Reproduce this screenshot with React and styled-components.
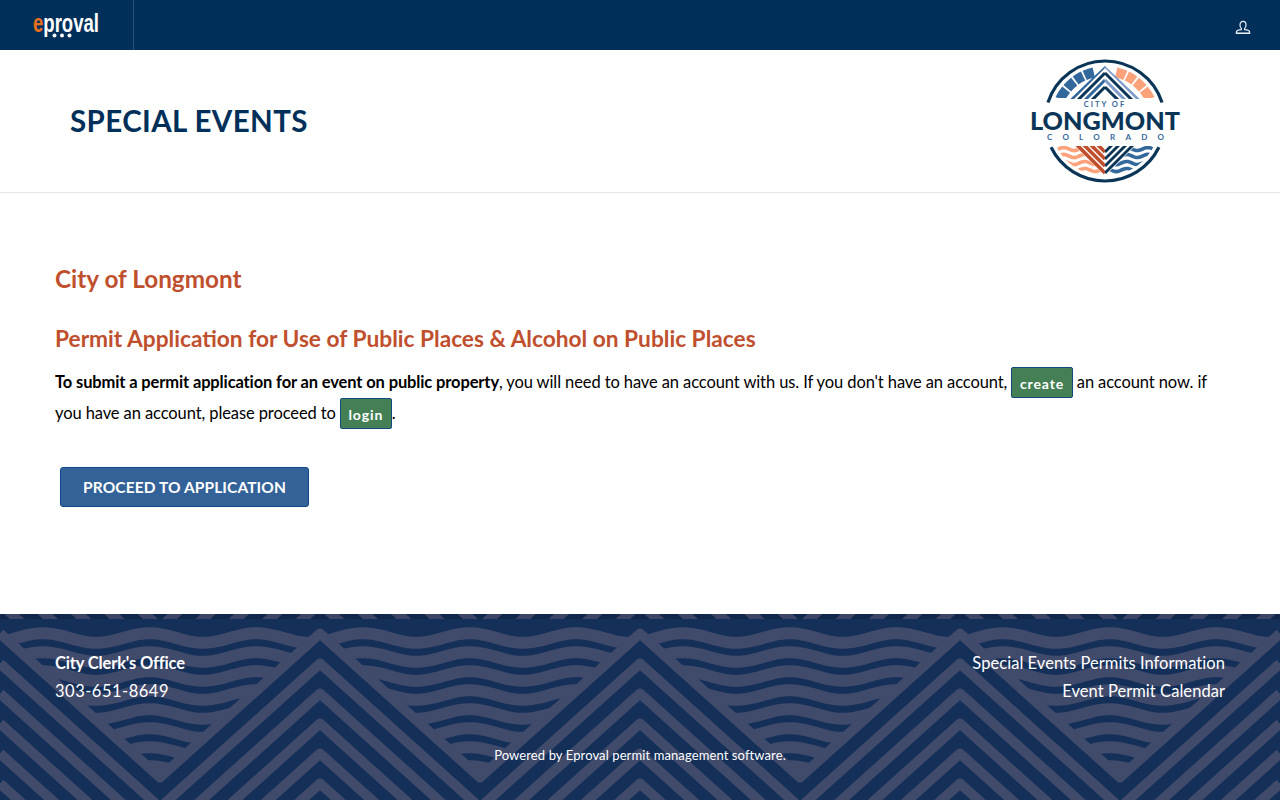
import React from 'react'
import styled, { createGlobalStyle } from 'styled-components'

const NAVY = '#002f5a'
const RUST = '#c04f2e'
const FONT = 'Lato, "Open Sans", sans-serif'

const GlobalStyle = createGlobalStyle`
  html, body {
    margin: 0;
    padding: 0;
    background: white;
    font-family: ${FONT};
  }
  * { box-sizing: border-box; }
`

const Page = styled.div`
  min-height: 100vh;
  display: flex;
  flex-direction: column;
`

const TopBar = styled.div`
  height: 50px;
  background: ${NAVY};
  display: flex;
  align-items: stretch;
  justify-content: space-between;
`

const Brand = styled.div`
  width: 134px;
  border-right: 1px solid #2b5079;
  display: flex;
  align-items: center;
  padding-left: 33px;
`

const UserButton = styled.div`
  display: flex;
  align-items: center;
  padding: 6px 29px 0 0;
`

const Banner = styled.header`
  height: 143px;
  border-bottom: 1px solid #e6e6e6;
  display: flex;
  align-items: center;
  justify-content: space-between;
  padding: 0 98px 0 70px;
`

const Title = styled.h1`
  margin: 0 0 2px;
  color: ${NAVY};
  font-size: 29.5px;
  font-weight: 700;
  letter-spacing: 0.4px;
  text-transform: uppercase;
`

const Main = styled.main`
  flex: 1;
  padding: 70px 55px 0;
`

const Heading = styled.h2`
  margin: 0;
  color: ${RUST};
  font-weight: 700;
  font-size: ${props => props.size}px;
  line-height: 32px;
  margin-bottom: ${props => props.after}px;
`

const Copy = styled.p`
  margin: 0;
  font-size: 16.5px;
  line-height: 31px;
  color: #000;
  letter-spacing: -0.1px;

  strong { font-weight: 700; letter-spacing: -0.13px; }
`

const SmallButton = styled.a`
  display: inline-block;
  height: 31px;
  line-height: 31px;
  padding: 0 7.5px;
  background: #447f55;
  border: 1px solid #104a7e;
  border-radius: 2px;
  color: white;
  font-size: 14px;
  font-weight: 700;
  letter-spacing: 0.9px;
  vertical-align: top;
`

const ProceedButton = styled.button`
  display: block;
  margin: 38px 0 0 5px;
  width: 249px;
  height: 40px;
  padding: 0;
  background: #336298;
  border: 1px solid #0f478b;
  border-radius: 3px;
  color: white;
  font-family: ${FONT};
  font-size: 15.5px;
  font-weight: 700;
  letter-spacing: 0.1px;
  text-transform: uppercase;
`

const Footer = styled.footer`
  position: relative;
  height: 186px;
  background: #142f58;
  color: white;
  overflow: hidden;
`

const FooterPattern = styled.svg`
  position: absolute;
  top: 0;
  left: 0;
`

const FooterBody = styled.div`
  position: relative;
  padding: 35px 55px 0;
`

const FooterColumns = styled.div`
  display: flex;
  justify-content: space-between;
  font-size: 16.5px;
  line-height: 28px;
  letter-spacing: 0.05px;
`

const FooterColumn = styled.div`
  text-align: ${props => props.align};
`

const FooterName = styled.div`
  font-weight: 700;
  letter-spacing: -0.15px;
`

const Phone = styled.div`
  letter-spacing: 0.5px;
`

const PoweredBy = styled.div`
  margin-top: 40px;
  text-align: center;
  font-size: 13px;
  line-height: 20px;
  letter-spacing: 0.1px;
`

// zigzag peaks sit every 320px, the same slope for each stacked band
const STRIPE = '#404a6b'
const PEAK_Y = 19.5
const DROP = 144

const zigzag = offset => {
  const points = []
  for (let i = 0; i <= 8; i++) {
    points.push(`${i * 160},${PEAK_Y + offset + (i % 2 ? DROP : 0)}`)
  }
  return points.join(' ')
}

const wave = y => {
  let d = ''
  for (let x = 0; x <= 1280; x += 4) {
    const value = y - 4.8 * Math.cos(((x - 43) / 106.67) * Math.PI * 2)
    d += `${x === 0 ? 'M' : 'L'}${x},${value.toFixed(2)}`
  }
  return d
}

const bands = [0, 30, 60, 90, 120, 150]
const topBands = [-30, -60, -90, -120, -150, -180, -210]
const waves = [24, 43, 62, 81, 100, 119, 138, 157]

const FooterDrawing = () => (
  <FooterPattern width="1280" height="186" viewBox="0 0 1280 186">
    <defs>
      <clipPath id="above-zigzag">
        <polygon points={`0,0 ${zigzag(0)} 1280,0`} />
      </clipPath>
      <clipPath id="top-strip">
        <rect x="0" y="0" width="1280" height="5" />
      </clipPath>
    </defs>
    <g clipPath="url(#above-zigzag)" fill="none" stroke={STRIPE} strokeWidth="12">
      {waves.map(y => (
        <path key={y} d={wave(y)} />
      ))}
    </g>
    <rect x="0" y="0" width="1280" height="5" fill="#11284b" />
    <g clipPath="url(#top-strip)" fill="none" stroke="#3c4565" strokeWidth="10">
      {topBands.map(offset => (
        <polyline key={offset} points={zigzag(offset)} />
      ))}
    </g>
    <g fill="none" stroke={STRIPE} strokeWidth="10" strokeLinejoin="round">
      {bands.map(offset => (
        <polyline key={offset} points={zigzag(offset)} />
      ))}
    </g>
  </FooterPattern>
)

const EprovalLogo = () => (
  <svg width="68" height="28" viewBox="0 0 68 28" overflow="visible">
    <text x="0" y="21" fontFamily="Liberation Sans Narrow, Liberation Sans, sans-serif" fontSize="26" fontWeight="700" fill="white" textLength="66" lengthAdjust="spacingAndGlyphs">
      <tspan fill="#e8701f">e</tspan>proval
    </text>
    <circle cx="21.5" cy="24.5" r="2" fill="white" />
    <circle cx="29" cy="24.5" r="2" fill="white" />
    <circle cx="36.5" cy="24.5" r="2" fill="white" />
  </svg>
)

const UserIcon = () => (
  <svg width="16" height="16" viewBox="0 0 16 16" fill="none">
    <path d="M5 5c0-2.3 1.2-3.6 3-3.6S11 2.700 11 5c0 1.700-.6 3-1.400 3.600v1c2.800.2 5 .8 5 2.400v1.500H1.400V12c0-1.600 2.200-2.200 5-2.400v-1C5.600 8 5 6.700 5 5z" stroke="#e8eef5" strokeWidth="1.200" />
    <path d="M2 12h12v2H2z" fill="#e8eef5" opacity="0.55" />
  </svg>
)

// arc segment on the seal, angles in degrees measured from the top
const arc = (r, from, to) => {
  const point = a => {
    const rad = (a * Math.PI) / 180
    return `${(1105 + r * Math.sin(rad)).toFixed(2)} ${(121 - r * Math.cos(rad)).toFixed(2)}`
  }
  return `M${point(from)} A${r} ${r} 0 ${Math.abs(to - from) > 180 ? 1 : 0} ${to > from ? 1 : 0} ${point(to)}`
}

const sealSegments = [
  [-64, -51],
  [-49, -38],
  [-36, -26],
  [-24, -13]
]

const sealWave = y => {
  let d = ''
  for (let x = 1048; x <= 1162; x += 2) {
    const value = y + 1.6 * Math.sin(((x - 1048) / 21) * Math.PI * 2)
    d += `${x === 1048 ? 'M' : 'L'}${x},${value.toFixed(2)}`
  }
  return d
}

const SealLogo = () => (
  <svg width="154" height="128" viewBox="1028 57 154 128">
    <defs>
      <clipPath id="seal-top">
        <polygon points="1105,66 1140,99 1070,99" />
      </clipPath>
      <clipPath id="seal-upper">
        <rect x="1040" y="60" width="130" height="38" />
      </clipPath>
      <clipPath id="seal-lower-left">
        <path d="M1105 176 L1105 146 L1050 146 L1050 176 Z" />
      </clipPath>
      <clipPath id="seal-lower-right">
        <path d="M1105 176 L1105 146 L1160 146 L1160 176 Z" />
      </clipPath>
      <clipPath id="seal-inner">
        <circle cx="1105" cy="121" r="55" />
      </clipPath>
      <clipPath id="seal-waves-left">
        <polygon points="1105,176 1075,146 1048,146 1048,178" />
      </clipPath>
      <clipPath id="seal-waves-right">
        <polygon points="1105,176 1135,146 1162,146 1162,178" />
      </clipPath>
    </defs>

    <path d={arc(60, -72, 72)} fill="none" stroke="#0b3557" strokeWidth="3.200" />
    <path d={arc(60, -116, -180)} fill="none" stroke="#0b3557" strokeWidth="3.200" />
    <path d={arc(60, 116, 180)} fill="none" stroke="#0b3557" strokeWidth="3.200" />

    <g clipPath="url(#seal-upper)" fill="none" strokeWidth="10">
      {sealSegments.map(([from, to]) => (
        <path key={from} d={arc(50, from, to)} stroke="#33689c" />
      ))}
      {sealSegments.map(([from, to]) => (
        <path key={from} d={arc(50, -to, -from)} stroke="#fba27a" />
      ))}
    </g>

    <g clipPath="url(#seal-top)" fill="none" strokeWidth="3">
      <line x1="1065" y1="106" x2="1105" y2="66" stroke="#33689c" />
      <line x1="1065" y1="113" x2="1105" y2="73" stroke="#0b3557" />
      <line x1="1065" y1="120" x2="1105" y2="80" stroke="#33689c" />
      <line x1="1065" y1="127" x2="1105" y2="87" stroke="#0b3557" />
      <line x1="1105" y1="66" x2="1145" y2="106" stroke="#7d9ccb" />
      <line x1="1105" y1="73" x2="1145" y2="113" stroke="#0b3557" />
      <line x1="1105" y1="80" x2="1145" y2="120" stroke="#7d9ccb" />
      <line x1="1105" y1="87" x2="1145" y2="127" stroke="#0b3557" />
    </g>

    <text x="1105" y="107" textAnchor="middle" fontFamily={FONT} fontSize="7.500" fontWeight="700" fill="#33689c" letterSpacing="2">CITY OF</text>
    <text x="1030" y="129.500" fontFamily={FONT} fontSize="24" fontWeight="900" fill="#0b3557" textLength="150" lengthAdjust="spacingAndGlyphs">LONGMONT</text>
    <text x="1047" y="140" fontFamily={FONT} fontSize="8" fontWeight="700" fill="#33689c" textLength="117" lengthAdjust="spacing">COLORADO</text>

    <g clipPath="url(#seal-inner)">
      <g clipPath="url(#seal-lower-left)" fill="none" stroke={RUST} strokeWidth="3.600">
        {[0, 7, 14, 21, 28].map(k => (
          <line key={k} x1="1105" y1={173 - k} x2="1060" y2={128 - k} />
        ))}
      </g>
      <g clipPath="url(#seal-lower-right)" fill="none" stroke="#0b3557" strokeWidth="2.800">
        {[0, 7, 14, 21, 28].map(k => (
          <line key={k} x1="1105" y1={173 - k} x2="1150" y2={128 - k} />
        ))}
      </g>
      <g clipPath="url(#seal-waves-left)" fill="none" stroke="#fba27a" strokeWidth="3.600">
        {[149, 156, 163, 170].map(y => (
          <path key={y} d={sealWave(y)} />
        ))}
      </g>
      <g clipPath="url(#seal-waves-right)" fill="none" stroke="#33689c" strokeWidth="3.600">
        {[149, 156, 163, 170].map(y => (
          <path key={y} d={sealWave(y)} />
        ))}
      </g>
    </g>
  </svg>
)

export default function App() {
  return (
    <Page>
      <GlobalStyle />
      <TopBar>
        <Brand>
          <EprovalLogo />
        </Brand>
        <UserButton>
          <UserIcon />
        </UserButton>
      </TopBar>
      <Banner>
        <Title>Special Events</Title>
        <SealLogo />
      </Banner>
      <Main>
        <Heading size={24.3} after={28}>City of Longmont</Heading>
        <Heading size={22.7} after={12}>Permit Application for Use of Public Places &amp; Alcohol on Public Places</Heading>
        <Copy>
          <strong>To submit a permit application for an event on public property</strong>, you will need to have an account with us. If you don't have an account, <SmallButton>create</SmallButton> an account now. if you have an account, please proceed to <SmallButton>login</SmallButton>.
        </Copy>
        <ProceedButton>Proceed to Application</ProceedButton>
      </Main>
      <Footer>
        <FooterDrawing />
        <FooterBody>
          <FooterColumns>
            <FooterColumn align="left">
              <FooterName>City Clerk's Office</FooterName>
              <Phone>303-651-8649</Phone>
            </FooterColumn>
            <FooterColumn align="right">
              <div>Special Events Permits Information</div>
              <div>Event Permit Calendar</div>
            </FooterColumn>
          </FooterColumns>
          <PoweredBy>Powered by Eproval permit management software.</PoweredBy>
        </FooterBody>
      </Footer>
    </Page>
  )
}
